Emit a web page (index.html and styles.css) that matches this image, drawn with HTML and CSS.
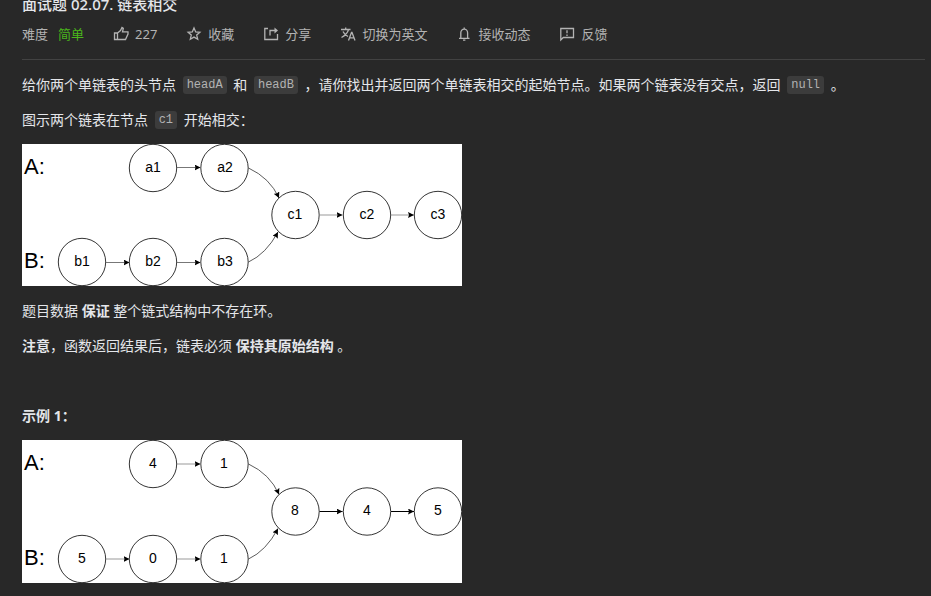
FILE: index.html
```html
<!DOCTYPE html>
<html lang="zh-CN">
<head>
<meta charset="utf-8">
<title>面试题 02.07. 链表相交</title>
<link rel="stylesheet" href="styles.css">
</head>
<body>
<main class="problem">
  <header class="problem-header">
    <h1 class="problem-title">面试题 02.07. 链表相交</h1>
    <div class="toolbar">
      <div class="difficulty"><span>难度</span><span class="easy">简单</span></div>
      <button class="tool" type="button">
        <svg class="icon" viewBox="0 0 16 16"><path d="M1.500 7h3v6.500h-3zM4.500 13.500H12.500l2.500-5.500V5.800H9.500l.8-3.500L9 1.500 7.500 4.500 4.500 7"/></svg>
        <span>227</span>
      </button>
      <button class="tool" type="button">
        <svg class="icon" viewBox="0 0 16 16"><path d="M8 2l1.700 3.900 4.200.4-3.200 2.800 1 4.100L8 11.100l-3.700 2.100 1-4.100-3.200-2.800 4.200-.4z"/></svg>
        <span>收藏</span>
      </button>
      <button class="tool" type="button">
        <svg class="icon" viewBox="0 0 16 16"><path d="M5 2.500H1.800v11h12.700V8M7 9.500V4.500h5"/><path class="solid" d="M11.500 1.500l3.500 3-3.500 3z"/></svg>
        <span>分享</span>
      </button>
      <button class="tool" type="button">
        <svg class="icon" viewBox="0 0 16 16"><path d="M1 3.500h9.500M5.700 1.500v2M8.500 3.700C7.500 7 5 9.500 1.500 11.500M3 5.500c1 2.200 3 4 5 5M8.500 14.500l3-8h.5l3 8M9.600 11.800h4.300"/></svg>
        <span>切换为英文</span>
      </button>
      <button class="tool" type="button">
        <svg class="icon" viewBox="0 0 16 16"><path d="M3 12.300h10.500M4.800 12V6.800a3.400 3.700 0 0 1 6.800 0V12M8.200 1.500v1.500M7 14.200h2.400"/></svg>
        <span>接收动态</span>
      </button>
      <button class="tool" type="button">
        <svg class="icon" viewBox="0 0 16 16"><path d="M1.800 14V2.500h12.700v9H4.300zM8 4.300v3M8 8.500V10"/></svg>
        <span>反馈</span>
      </button>
    </div>
  </header>

  <article class="description">
    <p>给你两个单链表的头节点 <code>headA</code> 和 <code>headB</code> ，请你找出并返回两个单链表相交的起始节点。如果两个链表没有交点，返回 <code>null</code> 。</p>
    <p>图示两个链表在节点 <code>c1</code> 开始相交：</p>

    <svg class="diagram" viewBox="0 0 440 142" role="img" aria-label="链表 A 与链表 B 在 c1 相交">
      <defs>
        <marker id="arrow" viewBox="0 0 6 6" refX="6" refY="3" markerWidth="6" markerHeight="6" markerUnits="userSpaceOnUse" orient="auto"><path d="M0 0l6 3-6 3 1-3z"/></marker>
      </defs>
      <g class="nodes">
        <circle cx="131" cy="24" r="23.700"/><circle cx="202.500" cy="24" r="23.700"/>
        <circle cx="60" cy="118" r="23.700"/><circle cx="131" cy="118" r="23.700"/><circle cx="202.500" cy="118" r="23.700"/>
        <circle cx="273.500" cy="71" r="23.700"/><circle cx="345" cy="71" r="23.700"/><circle cx="416" cy="71" r="23.700"/>
      </g>
      <g class="links">
        <path class="soft" d="M155 23.500h23.500"/>
        <path class="soft" d="M84 118.500h23.500"/><path class="soft" d="M155 118.500h23.500"/>
        <path class="pale" d="M297.500 71h23"/><path class="pale" d="M369 71h23"/>
        <path class="curve" d="M226.500 24Q248 34 257 54"/><path class="curve" d="M226.500 118Q244 110 256 88"/>
      </g>
      <g class="list-name"><text x="2" y="30">A:</text><text x="2" y="124">B:</text></g>
      <g class="labels">
        <text x="131" y="28">a1</text><text x="203" y="28">a2</text>
        <text x="60" y="122">b1</text><text x="131" y="122">b2</text><text x="203" y="122">b3</text>
        <text x="273" y="75">c1</text><text x="345" y="75">c2</text><text x="416" y="75">c3</text>
      </g>
    </svg>

    <p>题目数据 <strong>保证</strong> 整个链式结构中不存在环。</p>
    <p><strong>注意</strong>，函数返回结果后，链表必须 <strong>保持其原始结构</strong> 。</p>
    <p>&nbsp;</p>
    <p><strong>示例 1：</strong></p>

    <svg class="diagram" viewBox="0 0 440 143" role="img" aria-label="示例 1 的两个链表">
      <g class="nodes">
        <circle cx="131" cy="24" r="23.700"/><circle cx="202.500" cy="24" r="23.700"/>
        <circle cx="60" cy="119" r="23.700"/><circle cx="131" cy="119" r="23.700"/><circle cx="202.500" cy="119" r="23.700"/>
        <circle cx="273.500" cy="71.500" r="23.700"/><circle cx="345" cy="71.500" r="23.700"/><circle cx="416" cy="71.500" r="23.700"/>
      </g>
      <g class="links">
        <path class="pale" d="M155 24h23.500"/>
        <path class="pale" d="M84 119h23.500"/><path class="pale" d="M155 119h23.500"/>
        <path d="M297.500 71.500h23"/><path d="M369 71.500h23"/>
        <path class="curve" d="M226.500 24Q248 34 257 54.500"/><path class="curve" d="M226.500 119Q244 111 256 88.500"/>
      </g>
      <g class="list-name"><text x="2" y="30">A:</text><text x="2" y="125">B:</text></g>
      <g class="labels">
        <text x="131" y="28">4</text><text x="202" y="28">1</text>
        <text x="60" y="123">5</text><text x="131" y="123">0</text><text x="202" y="123">1</text>
        <text x="273" y="75">8</text><text x="345" y="75">4</text><text x="416" y="75">5</text>
      </g>
    </svg>
  </article>
</main>
</body>
</html>
```
FILE: styles.css
```css
* { box-sizing: border-box; }

html { background: #282828; }

body {
  margin: 0;
  height: 100vh;
  overflow: hidden;
  color: #e4e6ea;
  font: 14px/21px "Noto Sans", "Noto Sans CJK SC", sans-serif;
}

.problem { padding: 0 6px 0 22px; }

.problem-header {
  margin-top: -8px;
  padding-bottom: 15px;
  border-bottom: 1px solid #424242;
}

.problem-title {
  margin: 0 0 8px;
  font-size: 15px;
  font-weight: 500;
  line-height: 24px;
}

.toolbar {
  display: flex;
  align-items: center;
  gap: 29px;
  height: 20px;
  color: #b3b3b3;
  font-size: 13px;
  line-height: 20px;
  white-space: nowrap;
}

.difficulty { display: flex; gap: 10px; }
.easy { color: #4bb71b; }

.tool {
  display: flex;
  align-items: center;
  gap: 6px;
  padding: 0;
  border: 0;
  background: none;
  color: inherit;
  font: inherit;
  cursor: pointer;
}

.icon {
  width: 16px;
  height: 16px;
  fill: none;
  stroke: currentColor;
  stroke-width: 1.300;
}
.icon .solid { fill: currentColor; stroke: none; }

.description { padding-top: 14px; }

.description p { margin: 0 0 14px; }

code {
  margin: 0 3px;
  padding: 2px 4px;
  border-radius: 3px;
  background: #3c3c3c;
  color: #b3b3b3;
  font: 12px/14px "Liberation Mono", monospace;
  vertical-align: 2px;
}

.diagram {
  display: block;
  width: 440px;
  max-width: 100%;
  margin-bottom: 14px;
  background: #fff;
  font-family: "Liberation Sans", sans-serif;
}

.nodes { fill: #fff; stroke: #000; stroke-width: 0.800; }
.links { fill: none; stroke: #000; stroke-width: 1; }
.links path { marker-end: url(#arrow); }
.links .soft { stroke: #777; }
.links .pale { stroke: #999; }
.links .curve { stroke: #333; stroke-width: 0.800; }
#arrow path { fill: #000; stroke: none; marker-end: none; }
.labels { font-size: 14px; text-anchor: middle; }
.list-name { font-size: 22px; }
```
